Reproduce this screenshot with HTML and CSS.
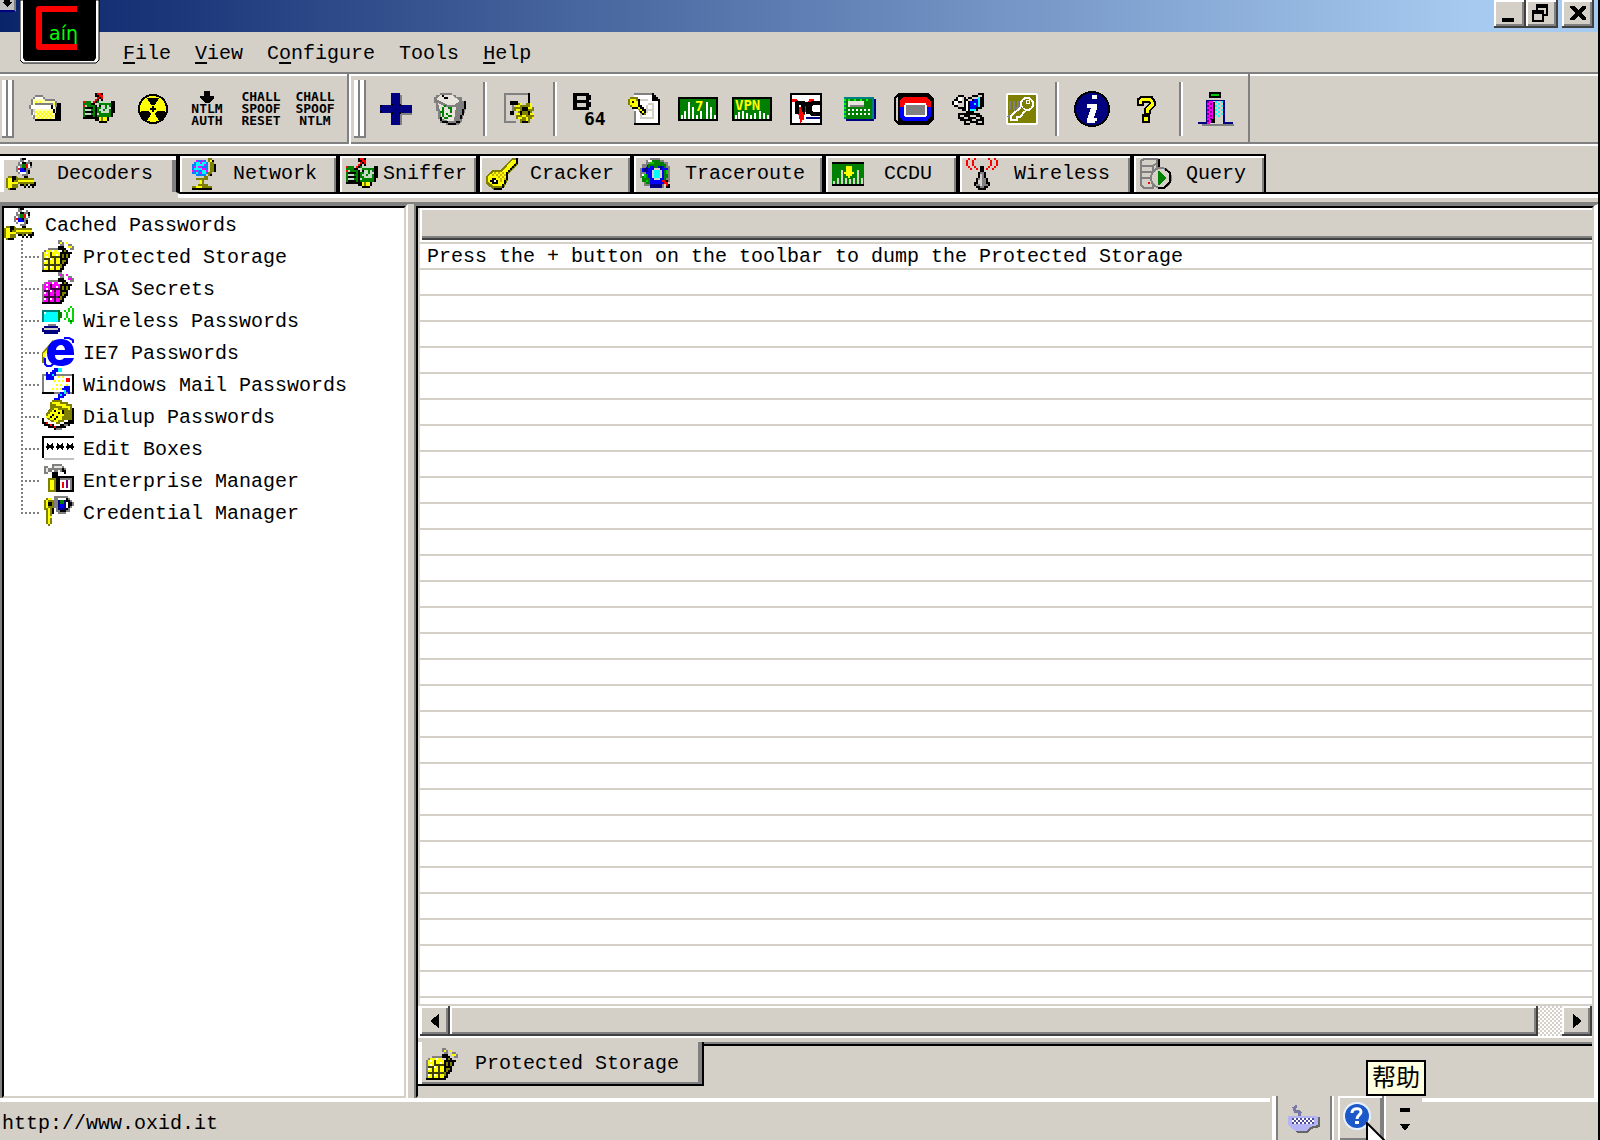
FILE: index.html
```html
<!DOCTYPE html>
<html lang="en">
<head>
<meta charset="utf-8">
<title>Cain</title>
<link rel="stylesheet" href="styles.css">
</head>
<body>
<svg class="sprites" aria-hidden="true">
  <symbol id="i-sniffer" viewBox="0 0 16 16">
    <path fill="#008000" d="M0 4h4v2h2v7H0zM7 4h8v8H7z"/><path d="M14 4h2v6h-1v2h-2v2h-1v1H8v-1H6v-1H0v-1h6V6h1v6h7zM1 7h4v1H1zM1 9h4v1H1zM1 11h4v1H1zM8 6h1v1H8z"/>
    <path fill="#c8d8c8" d="M1 6h1v1H1zM1 8h3v1H1zM1 10h3v1H1zM8 4h6v1H8zM7 5h1v2H7zM9 6h4v4H9zM8 8h1v1H8zM13 7h1v1h-1zM7 10h1v1H7z"/>
    <path fill="#008000" d="M11 6h1v2h-1zM10 8h1v1h-1z"/><path fill="#ff0" d="M8 12h4v2H8z"/><path fill="#808000" d="M9 12h1v2H9z"/>
    <path fill="red" d="M0 4h1v1H0zM0 6h1v1H0z"/>
    <path d="M6 0h4v4H9V3H8v1H7v1H6v1H4V5h1V4h1V3h1V2H6z"/><path fill="red" d="M7 0h2v1h1v2H9V2H8v1H7v1H6v1H5V4h1V3h1V2h1V1H7z"/>
  </symbol>
  <symbol id="i-decoder" viewBox="0 0 16 16">
    <path fill="#808080" d="M7 0h3v1h2v1h1v3h-1v2h-1v2H8V8H6V7H5V4h1V2h1z"/><path fill="#fff" d="M7 2h1v1H7zM6 4h1v3H6zM7 7h3v1H7zM9 1h2v1H9zM11 3h1v2h-1z"/>
    <path d="M8 0h2v1H8zM12 2h1v2h-1zM11 6h1v2h-1zM9 9h2v1H9zM8 2h2v1H8z"/>
    <path fill="#00f" d="M7 5h3v2H7z"/><path fill="red" d="M6 5h1v1H6zM10 3h1v2h-1z"/><path fill="#008000" d="M8 3h2v2H8z"/><path d="M9 5h1v1H9z"/>
    <path fill="#808000" d="M1 9h4l1 1h8v3h-1v1h-1v-1h-1v1H9v-1H6v2H5v1H1v-1H0v-5h1z"/><path fill="#ff0" d="M1 10h2v2h3v-1h8v1H6v1H3v2H1z"/><path d="M3 9h2v2H4v1H3zM7 13h2v1h1v-1h1v1h1v-1h2v-1h1v2h-1v1h-1v-1h-1v1h-1v-1h-1v1H9v-1H7zM2 15h3v1H2z"/>
  </symbol>
  <symbol id="i-globe" viewBox="0 0 16 16">
    <path fill="#808000" d="M11 0h2v1h1v6h-1v2h-2v2h-2v2h2v1h2v1H3v-1h3v-1h1v-2H5v-1h4V9h2V7h1V2h-1z"/><path fill="#ff0" d="M12 1h1v1h-1zM7 11h1v2H7zM5 14h3v1H5z"/><path d="M13 1h1v1h-1zM14 3h1v4h-1zM12 8h1v1h-1zM3 15h10v1H3z"/>
    <path fill="#0080ff" d="M5 1h5v1h1v6h-1v1H5V8H3V3h1V2h1z"/><path fill="#0ff" d="M5 2h5v2H8v2H6v2H5V6H4V4h1zM8 6h2v2H8z"/><path fill="#f0f" d="M5 1h1v1H5zM8 1h1v1H8zM7 2h1v1H7zM9 3h1v1H9zM4 4h1v1H4zM6 4h2v1H6zM8 5h2v1H8zM5 6h1v1H5zM7 7h1v1H7zM10 6h1v1h-1zM3 6h1v1H3z"/>
  </symbol>
  <symbol id="i-storage" viewBox="0 0 16 16">
    <path fill="#808080" d="M3 4h5v2H1V5h2zM0 6h1v9H0zM8 0h2v1h1v2H9V2H8zM13 2h2v1h1v2h-2V4h-1z"/><path d="M8 3h3v1h1v1h1v1h2v1h-1v2h-1v3h-1v1h-1v2h-1v1H0v-1h9V6h1V5H8z"/>
    <path fill="#808000" class="side-bricks" d="M10 7h1v2h-1zM11 5h1v1h-1zM10 10h1v2h-1zM12 7h1v2h-1zM9 12h1v2H9zM11 10h1v1h-1z"/>
    <path fill="currentColor" d="M2 5h6v1H2zM1 6h8v9H1zM9 1h1v1H9zM13 3h2v1h-2zM12 1h1v1h-1z"/>
    <path fill="#fff" d="M2 6h1v1H2zM5 5h1v1H5zM1 10h1v1H1zM4 9h1v1H4zM7 7h1v1H7zM1 13h1v1H1zM4 13h1v1H4zM7 12h1v1H7zM2 8h1v1H2zM6 10h1v1H6z"/>
    <path fill="#000" fill-opacity=".75" d="M1 9h3v1H1zM4 8h5v1H4zM1 12h8v1H1zM4 6h1v2H4zM3 10h1v2H3zM6 9h1v3H6zM3 13h1v2H3zM6 13h1v2H6z"/>
  </symbol>
</svg>

<div class="app">
  <header class="titlebar">
    <span class="sysbox"><svg viewBox="0 0 14 8"><path d="M4 0h6v2h2L7 7 2 2h2z"/></svg></span>
    <svg class="logo" viewBox="0 0 80 64" role="img" aria-label="Cain">
      <path fill="#fff" stroke="#000" stroke-width="1" d="M0 0h79v60l-3 3H3l-3-3z"/><path d="M3 0h73v58l-2 3H5l-2-3z"/>
      <path fill="none" stroke="red" stroke-width="6" stroke-linejoin="round" d="M57 9H19v38h38"/>
      <text x="29" y="40" fill="#0f0" font-family="DejaVu Sans" font-size="19">aíη</text>
    </svg>
    <div class="winbtns">
      <button class="winbtn" aria-label="Minimize"><svg viewBox="0 0 32 28"><path d="M8 18h12v4H8z"/></svg></button>
      <button class="winbtn" aria-label="Restore"><svg viewBox="0 0 32 28"><path fill-rule="evenodd" d="M10 4h12v12h-4v6H6V10h4zm2 4v2h6v4h2V8zm-4 6v6h8v-6z"/></svg></button>
      <button class="winbtn close" aria-label="Close"><svg viewBox="0 0 32 28"><path d="M8 6h4l4 4 4-4h4v2l-5 5 5 5v2h-4l-4-4-4 4H8v-2l5-5-5-5z"/></svg></button>
    </div>
  </header>

  <nav class="menubar">
    <button><u>F</u>ile</button><button><u>V</u>iew</button><button>C<u>o</u>nfigure</button><button>Tools</button><button><u>H</u>elp</button>
  </nav>

  <div class="toolbar">
    <div class="band">
      <span class="grip"></span>
      <button aria-label="Open"><svg class="ic" viewBox="0 0 16 16">
        <path d="M13 5h3v9H3v-1h11z"/><path fill="#ffffb0" d="M2 3h5l1 1h5v9H3V8H2z"/><path fill="none" stroke="#ff0" stroke-dasharray="1 1" d="M3 4.500h4M8 5.500h5M3 9.500h9M4 10.500h8M3 11.500h9M4 12.500h8"/>
        <path fill="#fff" d="M1 6h10v2H1zM3 2h4v1H3zM8 3h5v1H8zM1 8h1l1 5H2z"/><path fill="#808080" d="M3 1h4v1H3zM2 2h1v1H2zM1 3h1v3H1zM7 2h1v1H7zM8 3h5v1H8zM13 4h1v3h-1zM0 6h1v2H0zM1 8h1v3H1zM2 11h1v2H2zM3 5h9v1H3z"/><path d="M11 6h1v2h-1zM12 8h1v2h-1zM13 10h1v3h-1z"/>
      </svg></button>
      <button aria-label="Start sniffer"><svg class="ic"><use href="#i-sniffer"/></svg></button>
      <button aria-label="Start APR"><svg class="ic" viewBox="0 0 32 32">
        <circle cx="16" cy="16" r="14" fill="#ff0" stroke="#000" stroke-width="2"/>
        <path d="M10 5h12l-4 7h-4zM4 18h8l2 3-4 7c-4-2-6-5-6-10zM28 18h-8l-2 3 4 7c4-2 6-5 6-10zM15 13h2v2h2v2h-2v2h-2v-2h-2v-2h2z"/>
      </svg></button>
      <button class="word arrow"><svg viewBox="0 0 16 12"><path d="M5 0h6v5h4v2l-5 5H6L1 7V5h4z"/></svg>NTLM<br>AUTH</button>
      <button class="word">CHALL<br>SPOOF<br>RESET</button>
      <button class="word">CHALL<br>SPOOF<br>NTLM</button>
    </div>
    <div class="band">
      <span class="grip"></span>
      <button aria-label="Add"><svg class="ic" viewBox="0 0 32 32">
        <path fill="#808080" d="M14 2h8v12h12v8H22v12h-8z"/><path fill="#000080" d="M11 0h9v12h12v8H20v12h-9V20H0v-8h11z"/><path d="M11 11h2v2h-2zM19 11h2v2h-2zM11 19h2v2h-2zM19 19h2v2h-2zM0 12h2v2H0zM0 18h2v2H0z"/>
      </svg></button>
      <button aria-label="Remove"><svg class="ic" viewBox="0 0 16 16">
        <path fill="#808080" d="M3 0h6v1h2v1h3v2h2v4l-2 6-2 2H6v-1H3v-2H2V9H1V5H0V2h1V1h2z"/><path fill="#e8e4dc" d="M3 1h6l4 3-3 2H7L1 3zM2 5l4 2h5l-1 7H7l-3-1z"/>
        <path d="M4 1h1v1H4zM5 2h2v1H5zM15 4h1v4h-1zM14 8h1v3h-1zM13 11h1v2h-1zM11 14h2v1h-2zM7 15h4v1H7zM4 14h3v1H4zM3 12h1v2H3z"/>
        <path fill="#008000" d="M4 7h1v2H4zM5 6h1v1H5zM7 7h2v1H7zM8 8h1v2H8zM3 9h2v1H3zM4 10h1v2H4zM5 12h2v1H5zM7 11h2v1H7zM6 10h1v1H6z"/>
      </svg></button>
      <span class="sep"></span>
      <button aria-label="Configure"><svg class="ic" viewBox="0 0 16 16">
        <path fill="#d4d0c8" d="M0 0h13v14H0z"/><path fill="none" stroke="#808080" d="M12 .5H.5v14H6"/><path d="M12 0h1v6h-1zM3 4h4v2H5v5H3V9h1V6H3z"/>
        <path fill="#808080" d="M4 6h1v3H4z"/><path fill="#808000" d="M5 7h2V5h2v1h2V5h2v2h2v2h-1v2h1v2h-2v2H8v-2H6v-2h1V9H5z"/>
        <path fill="#ff0" d="M6 6h2v1H6zM8 5h1v1H8zM13 5h1v2h-1zM12 7h2v1h-2zM6 10h2v1H6zM13 10h2v1h-2zM7 12h2v1H7zM11 12h1v2h-1zM6 8h2v1H6zM9 11h2v1H9zM14 12h1v1h-1z"/><path d="M9 7h3v2H9zM8 9h1v2H8zM9 14h3v1H9zM12 9h1v2h-1z"/>
      </svg></button>
      <span class="sep"></span>
      <button aria-label="Base64 decoder"><svg class="ic ic36" viewBox="0 0 36 36">
        <path fill-rule="evenodd" d="M1 2h16v2h2v5h-2v2h2v5h-2v3H1zm4 3v4h9V5zm0 7v4h9v-4z"/>
        <text x="12" y="34" font-family="DejaVu Sans Mono" font-weight="bold" font-size="18">64</text>
      </svg></button>
      <button aria-label="Access decoder"><svg class="ic" viewBox="0 0 16 16">
        <path fill="#fff" d="M3 1h9l3 3v11H3z"/><path fill="#808080" d="M3 0h9v1H3zM3 9h1v6H3z"/><path d="M12 0h1v1h1v1h1v1h1v13H3v-1h12V4h-3z"/><path fill="#d4d0c8" d="M6 3h4v1H6zM10 5h3v1h-3zM10 8h3v1h-3zM6 9h1v4H6zM6 12h7v1H6zM9 6h1v4H9zM12 6h1v7h-1z"/>
        <path fill="#808000" d="M0 3h1V2h4v2h1v2l3 3v2H7L4 7H1V6H0z"/><path fill="#ff0" d="M1 3h3v1h1v2h1v1h1v1h1v2H7V9H6V8H5V7H2V6H1z"/><path d="M2 4h1v1H2zM5 3h1v3h1v1h1v1h1v2H8V9H7V8H6V7H5zM2 7h3v1H2zM6 9h1v1h1v1H7v-1H6z"/>
      </svg></button>
      <button aria-label="Type 7 decoder"><svg class="ic icwide" viewBox="0 0 40 24">
        <path fill="#008000" stroke="#000" stroke-width="2" d="M1 1h38v22H1z"/><path fill="#fff" d="M3 18h2v4H3zM6 14h2v8H6zM10 5h2v17h-2zM14 10h2v12h-2zM18 18h2v4h-2zM22 14h2v8h-2zM28 5h2v17h-2zM32 10h2v12h-2zM36 18h2v4h-2z"/>
        <text x="17" y="14" fill="#ff0" font-family="DejaVu Sans Mono" font-weight="bold" font-size="14">7</text>
      </svg></button>
      <button aria-label="VPN decoder"><svg class="ic icwide" viewBox="0 0 40 24">
        <path fill="#008000" stroke="#000" stroke-width="2" d="M1 1h38v22H1z"/><path fill="#fff" d="M3 18h2v4H3zM6 15h2v7H6zM10 14h2v8h-2zM14 16h2v6h-2zM18 18h2v4h-2zM22 16h2v6h-2zM27 14h2v8h-2zM31 16h2v6h-2zM35 18h2v4h-2z"/>
        <text x="3" y="13" fill="#ff0" font-family="DejaVu Sans Mono" font-weight="bold" font-size="14">VPN</text>
      </svg></button>
      <button aria-label="VNC decoder"><svg class="ic" viewBox="0 0 32 32">
        <path fill="#fff" stroke="#000" stroke-width="2" d="M1 1h30v30H1z"/><path fill="none" stroke="red" stroke-width="3" d="M2 7h4l5 19 6-14M17 12l4-5h3"/>
        <path fill="none" stroke="#000" stroke-width="4" d="M7 21V10h6v11M14 11h4v10M30 10h-8l-2 3v5l2 3h8"/><path fill="red" d="M9 14h2l3 9v4h-2z"/><path fill="#000080" d="M16 24h14v2H16z"/>
      </svg></button>
      <button aria-label="Hash calculator"><svg class="ic icflat" viewBox="0 0 16 12">
        <path fill="#008080" d="M0 0h15v11H0z"/><path fill="#000080" d="M15 1h1v10h-1zM1 11h14v1H1z"/><path fill="#008000" d="M1 1h13v10H1z"/><path fill="#e8e4dc" d="M2 2h8v3H2z"/><path fill="#808080" d="M3 4h7v1H3z"/><path fill="#0f0" d="M0 1h1v1H0zM0 3h1v1H0zM0 5h1v1H0zM0 7h1v1H0zM0 9h1v1H0zM2 1h1v1H2zM5 1h1v1H5zM8 1h1v1H8zM11 1h1v1h-1z"/>
        <path fill="none" stroke="#fff" stroke-dasharray="1 1" d="M2 6.500h12M2 8.500h12"/>
      </svg></button>
      <button aria-label="Token calculator"><svg class="ic ictoken" viewBox="0 0 40 32">
        <path d="M4 0h30l6 6v20l-6 6H4l-4-5V5z"/><path fill="#d4d0c8" d="M2 6l2-3v26l-2-3z"/><path fill="red" d="M9 4h23l5 5v5H6V8z"/><path fill="#00f" d="M6 14h31v9l-5 5H9l-3-4z"/><path fill="#808080" stroke="#fff" stroke-width="2" d="M12 11h19l1 2v9l-1 1H12l-1-1v-9z"/>
      </svg></button>
      <button aria-label="Remote desktop"><svg class="ic" viewBox="0 0 16 16">
        <path d="M3 1h3v1h1v1h1V2h2V1h3V0h3v7h-1v1h-2v1h-2v1H7V9H5V8H3V7H1V6H0V4h1V3h1V2h1z"/><path fill="#fff" d="M3 2h2v2H3zM1 4h2v2H1z"/><path fill="#d4d0c8" d="M5 2h1v5H3V5h2zM8 3h2V2h3V1h2v1h-2v1h-3v1H8z"/><path fill="#fff" d="M7 4h1v5H7z"/>
        <path fill="#00f" d="M9 4h2V3h3v4h-2v1H9z"/><path fill="#0ff" d="M13 2h1v5h-1zM9 8h3v1H9zM11 5h1v1h-1z"/>
        <path d="M3 10h11v1h1v1h1v4h-4v-1H9v1H6v-2H4v-1H3z"/><path fill="#d4d0c8" d="M4 11h2v1H4zM6 12h2v1H6zM9 11h3v1H9zM12 12h2v1h-2zM7 14h2v1H7zM10 13h2v1h-2zM13 14h2v1h-2z"/>
      </svg></button>
      <button aria-label="Syskey"><svg class="ic" viewBox="0 0 32 32">
        <rect x="1" y="1" width="30" height="30" rx="2" fill="#808000" stroke="#fff" stroke-width="2"/><path fill="none" stroke="#808080" stroke-width="5" stroke-dasharray="2 2" d="M3 10h13M3 14h11M3 25l9-10"/><circle cx="21" cy="11" r="6" fill="none" stroke="#fff" stroke-width="2"/><circle cx="22" cy="9" r="2" fill="none" stroke="#fff"/><path fill="#808000" stroke="#fff" stroke-width="2" d="M15 14L5 23v4h6v-3h3l5-6"/>
      </svg></button>
      <span class="sep"></span>
      <button aria-label="About"><svg class="ic ic36" viewBox="0 0 36 36">
        <circle cx="18" cy="18" r="17" fill="#000080" stroke="#000" stroke-width="2"/><path fill="#fff" d="M18 4h5v4h-5zM13 13h10v4l-3 10h3v3h-2v2h-8v-4l4-11h-4z"/>
      </svg></button>
      <button aria-label="Help"><svg class="ic ichelp" viewBox="0 0 20 28">
        <path fill="none" stroke="#000" stroke-width="7" d="M4 11V6l3-2h7l2 3v3l-5 5v4"/><path d="M6 19h8v9H6z"/><path fill="none" stroke="#ff0" stroke-width="3" d="M4 9V6l3-2h7l2 3v3l-5 5v3"/><path fill="#ff0" d="M8 22h4v4H8z"/>
      </svg></button>
      <span class="sep"></span>
      <button aria-label="Exit"><svg class="ic ic36" viewBox="0 0 38 36">
        <path fill="#808080" d="M4 34h34v2H4z"/><path d="M12 0h12v6H12z"/><path fill="#0c0" d="M14 2h8v2h-8z"/><path fill="#000080" d="M8 8h20v24h9v2H26V10H10v24H0v-2h8z"/><path fill="#f0f" d="M10 10h6v20l-4 4h-2z"/><path fill="none" stroke="#800080" stroke-width="2" stroke-dasharray="2 2" d="M11 10v22M14 12v20"/><path d="M16 11h2v22h-4v-4h2z"/><path fill="#d4d0c8" d="M18 10h8v24h-8z"/><path fill="none" stroke="#0ff" stroke-width="2" stroke-dasharray="2 2" d="M19 10v16M22 12v14M25 10v16"/>
      </svg></button>
    </div>
  </div>

  <div class="tabs" role="tablist">
    <button class="tab active" role="tab" aria-selected="true"><svg class="ic"><use href="#i-decoder"/></svg><span>Decoders</span></button>
    <button class="tab" role="tab"><svg class="ic"><use href="#i-globe"/></svg><span>Network</span></button>
    <button class="tab" role="tab"><svg class="ic"><use href="#i-sniffer"/></svg><span>Sniffer</span></button>
    <button class="tab" role="tab"><svg class="ic" viewBox="0 0 16 16">
      <path fill="#808000" d="M13 0h3v3l-5 5v3l-2 4-5 1-4-3V9l3-3h4z"/><path fill="#ff0" d="M13 1h2v1l-5 6v3l-2 3H4l-3-2V9l3-2h4z"/><path fill="none" stroke="#c8b400" stroke-dasharray="1 1" d="M4 7.500h5M3 8.500h7M6 9.500h4M7 10.500h3M7 11.500h2"/><path d="M3 10h2v1h1v2H3v-1H2v-1h1zM15 0h1v3h-1v1h-1v1h-1v1h-1v1h-1v4h-1v2H9v2H8v1H4v-1h4v-2h1v-2h1V7h1V6h1V5h1V4h1V3h1z"/><path fill="#fff" d="M4 11h1v1H4z"/>
    </svg><span>Cracker</span></button>
    <button class="tab" role="tab"><svg class="ic" viewBox="0 0 16 16">
      <path fill="#808080" d="M5 0h5v1h2v1h2v2h1v8h-1v1h-2v2H5v-1H2v-2H1v-2H0V5h1V3h2V1h2z"/><path fill="#00f" d="M4 3h8v2h2v5h-2v3H5v-2H3V7H1V5h2z"/><path fill="#008000" d="M5 1h5v1h2v1h1v2h-1V4H9v1H7V4H5v1H4V3h1zM1 8h3v2h1v3H3v-1H1zM12 6h2v4h-1v1h-1z"/><path fill="#0c0" d="M5 2h2v1H5zM2 8h1v2H2zM3 11h1v1H3zM13 6h1v2h-1z"/><path fill="#fff" d="M4 1h2v1H4zM1 8h1v1H1z"/><path fill="#000080" d="M5 13h6v2H5zM2 5h2v2H2zM10 4h1v2h-1z"/><path fill="#d4d0c8" d="M7 5h3v1h1v4h-1v1H7v-1H6V6h1z"/><path fill="#0ff" d="M7 6h3v4H7z"/><path fill="red" d="M11 11h2v1h1v1h-2v-1h-1zM13 13h1v1h-1z"/><path fill="#000" d="M12 11h2v1h-1zM14 13h1v2h-2v-1h1z"/>
    </svg><span>Traceroute</span></button>
    <button class="tab" role="tab"><svg class="ic icflat" viewBox="0 0 32 24">
      <path d="M0 0h32v24H0z"/><path fill="#008000" d="M0 2h32v20H0z"/><path fill="#d4d0c8" d="M1 19h2v3H1zM5 16h2v6H5zM9 8h2v14H9zM13 16h2v6h-2zM17 17h2v5h-2zM21 16h2v6h-2zM25 8h2v14h-2zM29 16h2v6h-2z"/><path fill="#ff0" d="M14 4h6v6h2v2h-2v2h-2v2h-2v-2h-2v-2h-2v-2h2z"/>
    </svg><span>CCDU</span></button>
    <button class="tab" role="tab"><svg class="ic" viewBox="0 0 32 32">
      <path fill="red" d="M2 0h2v2H2v6h2v2H2V8H0V2h2zM4 10h2v2H4zM8 0h2v2H8zM6 2h2v6H6zM8 8h2v2H8zM10 10h2v2h-2zM28 0h2v2h2v6h-2v2h-2V8h2V2h-2zM26 10h2v2h-2zM22 0h2v2h-2zM24 2h2v6h-2zM22 8h2v2h-2zM20 10h2v2h-2z"/>
      <path d="M14 8h4v6h2v6h2v4h2v4h-2v2h-2v2h-8v-2h-2v-2H8v-4h2v-4h2v-6h2z"/><path fill="#808080" d="M14 14h4v6h2v6h2v2h-4v2h-4v-2h-4v-2h2v-6h2z"/><path fill="#d4d0c8" d="M14 16h2v12h-2v-2h-2v-4h2z"/>
    </svg><span>Wireless</span></button>
    <button class="tab last" role="tab"><svg class="ic" viewBox="0 0 32 32">
      <path fill="#d4d0c8" stroke="#808080" stroke-width="2" d="M1 3l3-2h13v4l-4 3v22H4l-3-3zM1 8h12M1 14h12M1 20h12M13 8l4-3v8"/><path d="M18 1h2v12h-2z"/><circle cx="21" cy="20" r="10" fill="#d4d0c8" stroke="#808080" stroke-width="2"/><path fill="none" stroke="#000" stroke-width="2" d="M25 11l5 4v9l-6 6h-6"/><path fill="#008000" d="M18 13h2l6 7-6 7h-2z"/><path fill="red" d="M8 24h2v2H8z"/>
    </svg><span>Query</span></button>
    <div class="tabs-rest"></div>
  </div>
  <div class="tabs-base"></div>

  <main class="workspace">
    <section class="pane side">
      <div class="tree">
        <div class="node root"><svg class="ic"><use href="#i-decoder"/></svg>Cached Passwords</div>
        <ul>
          <li class="node"><svg class="ic gold"><use href="#i-storage"/></svg>Protected Storage</li>
          <li class="node"><svg class="ic magenta"><use href="#i-storage"/></svg>LSA Secrets</li>
          <li class="node"><svg class="ic" viewBox="0 0 16 16">
            <path fill="#008080" d="M0 3h9v6H0z"/><path fill="#0ff" d="M1 4h7v5H1z"/><path fill="#fff" d="M1 4h1v1H1z"/><path fill="#808080" d="M3 10h4v1H3z"/><path fill="#000080" d="M1 11h7v1h1v2H8v1H1v-1H0v-2h1z"/><path fill="#d4d0c8" d="M1 12h7v1H1z"/>
            <path fill="#008000" d="M8 3h1v5H8zM9 4h1v3H9zM14 1h1v1h-1zM13 8h2v1h-2z"/><path fill="#00d800" d="M11 3h1v1h1v3h-1v1h-1V7h1V4h-1zM14 1h1v1h1v7h-1v1h-1V9h1V2h-1zM13 2h1v7h-1V7h1V4h-1z"/>
          </svg>Wireless Passwords</li>
          <li class="node"><svg class="ic smooth" viewBox="0 0 32 32">
            <path fill="none" stroke="#808000" stroke-width="3" d="M1 27V18L12 5"/><path fill="none" stroke="#ff0" stroke-width="2" d="M2 21v-3L12 8"/><path fill="none" stroke="#00f" stroke-width="2" d="M22 2h5l4 2v3M3 22v6l2 2h4l3-3"/>
            <path fill="#00f" fill-rule="evenodd" d="M19 3c8 0 13 5 13 14v2H13c0 4 2 5 5 5 2 0 3-1 4-2h10c-2 6-7 8-13 8C10 30 5 25 5 17S10 3 19 3zm-5 11h9c0-3-2-5-4-5s-5 2-5 5z"/>
          </svg>IE7 Passwords</li>
          <li class="node"><svg class="ic" viewBox="0 0 16 16">
            <path fill="#fff" stroke="#808080" d="M.5 3.500h15v9H.5z"/><path d="M15 3h1v10h-1zM0 12h6v1H0z"/><path fill="#ff0" d="M8 4h1v1H8zM10 4h1v1h-1zM6 6h1v1H6zM8 6h1v1H8zM10 6h1v1h-1zM7 8h1v1H7zM9 8h1v1H9zM12 8h1v1h-1zM5 10h1v1H5zM7 10h1v1H7zM9 10h1v1H9zM13 9h1v1h-1z"/><path fill="red" d="M12 5h2v2h-2z"/><path fill="#00f" d="M6 0h3v1H8v1H7v2H6v2H2V2h1v1h1V2h1V1h1zM11 9h3v4h-1v-1h-1v2h-1v1H9v1H6v-1h2v-2h1v-1h2v-1h-1v-1h1z"/><path fill="#0ff" d="M8 0h2v2H8zM11 11h1v2h-1zM9 13h1v1H9zM5 3h1v1H5z"/>
          </svg>Windows Mail Passwords</li>
          <li class="node"><svg class="ic" viewBox="0 0 16 16">
            <path fill="#808000" d="M5 0h5v1h3v1h2v2h1v6l-5 3-5-1-4-3V7l2-3V1h1z"/><path fill="#ff0" d="M5 1h4v1h3v1h2v2h-1V4h-3V3H7V2H5zM3 7h1V6h1V5h1V4h2v1h2v2h1v1h-1v2H8v1H6v-1H4V9H2V8h1z"/><path d="M6 5h1v1H6zM8 6h1v1H8zM5 7h1v1H5zM7 8h1v1H7zM4 8h1v1H4zM6 9h1v1H6zM10 5h1v2h-1zM15 4h1v8h-2v1h-2v1h-2v1H6v-1H3v-1H1v-1H0V9h1v2h2v1h3v1h3v-1h2v-1h2v-1h2z"/><path fill="#fff" d="M1 9h1v1h2v1h3v1h2v-1h2v-1h2v1h-2v1H9v1H6v-1H3v-1H1z"/><path fill="#808080" d="M11 12h2v1h-2zM7 14h3v1H7z"/><path fill="red" d="M2 11h1v1H2zM4 12h1v1H4zM6 13h1v1H6z"/>
          </svg>Dialup Passwords</li>
          <li class="node"><svg class="ic icflat" viewBox="0 0 32 24">
            <path fill="#fff" d="M0 0h32v24H0z"/><path d="M0 0h32v2H2v20H0z"/><path fill="#c0c0c0" d="M2 22h30v2H2z"/><path fill="none" stroke="#000" stroke-width="2" d="M4 11h8M5 8l6 5M11 8l-6 5M14 11h8M15 8l6 5M21 8l-6 5M24 11h8M25 8l6 5M31 8l-6 5"/>
          </svg>Edit Boxes</li>
          <li class="node"><svg class="ic" viewBox="0 0 16 16">
            <path fill="#808080" d="M1 1h2v1h2V0h5v1h1v1h1v3h-1V4H9V3H8v3H6V3H5v1H3v1H1z"/><path fill="#e8e4dc" d="M2 2h1v2H2zM6 1h4v1H6z"/><path d="M5 4h3v3H5zM10 2h1v1h1v2h-1V4h-1zM7 6h9v8H7z"/><path fill="#808000" d="M3 7h4v7H3z"/><path fill="#ff0" d="M4 8h2v5H4z"/><path fill="#fff" d="M9 8h6v5H9z"/><path fill="#808080" d="M9 7h6v1H9zM14 8h1v5h-1z"/><path fill="red" d="M10 9h1v3h-1z"/><path fill="#800080" d="M12 8h1v4h-1z"/>
          </svg>Enterprise Manager</li>
          <li class="node"><svg class="ic" viewBox="0 0 16 16">
            <path fill="#808080" d="M6 0h7v1h1v1h1v1h1v2h-1v1h-1v2h-2v1H8V8H7V6H6z"/><path fill="#fff" d="M8 1h4v1H8zM12 2h1v1h1v3h-1v1h-1z"/><path d="M12 1h1v1h1v1h1v2h-1v1h-1v1h-1v1H9V7h3V6h1V3h-1z"/><path fill="#000080" d="M8 2h4v5H8z"/><path fill="#008000" d="M9 2h2v2H9z"/><path fill="#00f" d="M9 4h2v2H9z"/>
            <path fill="#808000" d="M2 1h3v1h1v4H5v8H4v1H3v-1H2V7H1V2h1z"/><path fill="#ff0" d="M2 2h1v4H2zM3 1h2v1H3zM3 6h1v8H3zM4 10h1v1H4z"/><path d="M3 3h2v2H3zM5 6h1v3H5z"/>
          </svg>Credential Manager</li>
        </ul>
      </div>
    </section>

    <section class="pane content">
      <div class="inner">
        <div class="list">
          <table>
            <thead><tr><th aria-label="Entry"></th></tr></thead>
            <tbody><tr><td>Press the + button on the toolbar to dump the Protected Storage</td></tr></tbody>
          </table>
        </div>
        <div class="scrollbar">
          <button class="sbtn" aria-label="Scroll left"><svg viewBox="0 0 8 14"><path d="M8 0v14L0 8V6z"/></svg></button>
          <div class="thumb"></div>
          <div class="track"></div>
          <button class="sbtn" aria-label="Scroll right"><svg viewBox="0 0 8 14"><path d="M0 0v14l8-6V6z"/></svg></button>
        </div>
        <div class="sheets" role="tablist">
          <button class="sheet" role="tab" aria-selected="true"><svg class="ic gold"><use href="#i-storage"/></svg><span>Protected Storage</span></button>
          <div class="sheets-rest"></div>
        </div>
      </div>
    </section>
  </main>

  <footer class="status">http://www.oxid.it</footer>

  <div class="langbar">
    <button class="lang-key" aria-label="Soft keyboard"><svg viewBox="0 0 32 30"><path fill="none" stroke="#7878a8" stroke-width="3" d="M11 12l1-3-2-2H7L6 4l3-2"/><path fill="#666" d="M3 13h29v10l-9 2-4 4H9l-6-6z"/><path fill="#b4b4f4" d="M0 12h29l1 2v7l-8 2-4 4H8l-6-4-2-3z"/><path fill="#fff" d="M4 14h22v6H4z"/><path fill="none" stroke="#4c4c98" stroke-width="2" stroke-dasharray="2 2" d="M4 15h22M6 17h20M4 19h22"/></svg></button>
    <button class="lang-help" aria-label="Help"><svg viewBox="0 0 30 30"><circle cx="15" cy="15" r="14" fill="#e8f2ff"/><circle cx="15" cy="15" r="12" fill="#1c58c8"/><path fill="none" stroke="#fff" stroke-width="3" d="M10 12c0-5 9-6 9-1 0 3-4 3-4 7"/><path fill="#fff" d="M13 20h4v3h-4z"/></svg></button>
    <div class="lang-more"><svg viewBox="0 0 10 22"><path d="M0 0h10v4H0zM0 16h10l-4 6H4z"/></svg></div>
  </div>
  <div class="tooltip" role="tooltip" lang="zh-CN">帮助</div>
  <svg class="cursor" viewBox="0 0 20 18"><path fill="#fff" stroke="#000" stroke-width="2" d="M1 22V1l20 20"/></svg>
</div>
</body>
</html>
```
FILE: styles.css
```css
* { box-sizing: border-box; }

:root {
  --face: #d4d0c8;
  --shade: #808080;
  --dark: #404040;
  --light: #fff;
}

body {
  margin: 0;
  height: 100vh;
  overflow: hidden;
  background: var(--face);
  color: #000;
  font: 20px/32px "Liberation Mono", monospace;
}

button {
  margin: 0;
  padding: 0;
  border: 0;
  border-radius: 0;
  background: var(--face);
  color: inherit;
  font: inherit;
}

svg { display: block; flex: none; shape-rendering: crispEdges; }
.sprites { position: absolute; width: 0; height: 0; }

.ic { width: 32px; height: 32px; }
.ic36 { width: 36px; height: 36px; }
.icwide { width: 40px; height: 24px; }
.icflat { width: 32px; height: 24px; }
.ictoken { width: 40px; height: 32px; }
.ichelp { width: 20px; height: 28px; }
.gold { color: #ff0; }
.magenta { color: #f0f; }
.smooth { shape-rendering: auto; }

.app {
  position: relative;
  display: flex;
  flex-direction: column;
  height: 100%;
  border-right: 2px solid #000;
}

/* Title bar */
.titlebar {
  display: flex;
  justify-content: space-between;
  height: 32px;
  padding-right: 4px;
  background: linear-gradient(90deg, #0a246a, #a6caf0 92%);
}
.sysbox {
  width: 16px;
  height: 12px;
  background: #c0c0c0;
  border-right: 2px solid var(--shade);
  border-bottom: 2px solid #000080;
}
.sysbox svg { width: 14px; height: 8px; }
.logo { position: absolute; top: 0; left: 20px; width: 80px; height: 64px; }
.winbtns { display: flex; }
.winbtn {
  width: 32px;
  height: 28px;
  box-shadow: inset -2px -2px var(--dark), inset 2px 2px var(--light), inset -4px -4px var(--shade);
}
.winbtn svg { width: 32px; height: 28px; }
.close { margin-left: 4px; }

/* Menu */
.menubar {
  display: flex;
  gap: 24px;
  align-items: center;
  height: 40px;
  padding: 4px 0 0 123px;
}
.menubar u { text-decoration-thickness: 2px; text-underline-offset: 3px; }

/* Toolbar */
.toolbar {
  display: flex;
  height: 74px;
  border-top: 2px solid var(--shade);
  border-bottom: 2px solid var(--light);
  box-shadow: inset 0 2px var(--light), inset 0 -2px var(--shade);
}
.band {
  display: flex;
  align-items: center;
  padding: 2px 5px 2px 2px;
  border-right: 2px solid var(--shade);
}
.band + .band { padding-left: 5px; box-shadow: inset 2px 0 var(--light); }
.band button {
  display: grid;
  place-items: center;
  width: 54px;
  height: 48px;
  background: none;
}
.grip {
  width: 12px;
  height: 58px;
  margin-right: 4px;
  border-bottom: 2px solid var(--shade);
  background: linear-gradient(90deg, #fff 4px, #808080 4px 6px, #fff 6px 10px, #808080 10px);
}
.band + .band .grip { margin-right: 3px; }
.sep {
  width: 4px;
  height: 54px;
  margin: 0 6px;
  border-left: 2px solid var(--shade);
  border-right: 2px solid var(--light);
}
.band .word {
  display: block;
  padding: 6px 0;
  font: bold 13px/12px "DejaVu Sans Mono", monospace;
}
.word svg { width: 16px; height: 12px; margin: 0 auto; }

/* Main tabs */
.tabs {
  display: grid;
  grid-template-columns: 180px 160px 140px 154px 192px 134px 174px 132px 1fr;
  padding-top: 8px;
}
.tab {
  display: flex;
  align-items: center;
  height: 40px;
  padding: 0 4px 0 6px;
  border: solid #000;
  border-width: 2px 4px 2px 0;
  box-shadow: inset 2px 2px var(--light), inset -2px 0 var(--shade);
}
.tab span { flex: 1; text-align: center; }
.tab.active { border-bottom-color: var(--face); box-shadow: inset 4px 4px var(--light), inset -4px 0 var(--shade); }
.tab.last { border-right-width: 2px; }
.tabs-rest { border-bottom: 2px solid #000; }
.tabs-base { height: 4px; margin: 0 0 4px 178px; background: var(--light); }

/* Work area */
.workspace {
  display: flex;
  gap: 6px;
  flex: 1;
  min-height: 0;
  border-top: 2px solid var(--shade);
}
.pane { border: solid var(--shade); border-width: 2px 0 0 2px; }
.side { width: 408px; border-right: 2px solid var(--light); }
.content { flex: 1; min-width: 0; border-right: 4px solid var(--light); }

.tree, .inner {
  height: 100%;
  border: 2px solid #000;
  border-right-color: var(--face);
  border-bottom-color: var(--face);
}
.tree { background: #fff; }
.tree ul { margin: 0; padding: 0 0 0 17px; list-style: none; }
.node {
  display: flex;
  align-items: center;
  gap: 9px;
  height: 32px;
  padding-top: 4px;
  white-space: pre;
}
.node .ic { margin-bottom: 4px; }
li.node {
  padding-left: 21px;
  background:
    repeating-linear-gradient(90deg, #808080 0 2px, transparent 2px 4px) 0 16px / 20px 2px no-repeat,
    repeating-linear-gradient(#808080 0 2px, transparent 2px 4px) 0 0 / 2px 100% no-repeat;
}
li.node:last-child { background-size: 20px 2px, 2px 16px; }

.inner { display: flex; flex-direction: column; }
.list {
  flex: 1;
  min-height: 0;
  overflow: hidden;
  margin-left: 2px;
  background: repeating-linear-gradient(#fff 0 24px, #d4d0c8 24px 26px) 0 36px #fff;
}
table { width: 100%; border-collapse: separate; border-spacing: 0; }
th {
  height: 36px;
  padding: 0;
  background: var(--face);
  border-bottom: 2px solid var(--face);
  box-shadow: inset 2px 2px #fff, inset 0 -2px #fff, inset 0 -4px var(--dark), inset 0 -6px var(--shade);
}
td {
  height: 26px;
  padding: 2px 7px 0;
  border-bottom: 2px solid var(--face);
  line-height: 22px;
  white-space: pre;
}

.scrollbar {
  display: flex;
  height: 34px;
  padding: 2px 0 2px 2px;
  background: linear-gradient(#d4d0c8 2px, #fff 2px);
}
.sbtn, .thumb {
  background: var(--face);
  box-shadow: inset -2px -2px var(--dark), inset 2px 2px var(--light), inset -4px -4px var(--shade);
}
.sbtn { display: grid; place-items: center; width: 30px; }
.sbtn svg { width: 8px; height: 14px; }
.thumb { flex: 1; }
.track { width: 24px; background: repeating-conic-gradient(#d4d0c8 0 25%, #fff 0 50%) 0 0 / 4px 4px; }

.sheets { display: flex; height: 58px; padding-top: 4px; }
.sheet {
  display: flex;
  align-items: center;
  gap: 17px;
  height: 44px;
  padding: 2px 23px 0 8px;
  border: solid #000;
  border-width: 0 2px 2px 0;
  box-shadow: inset 4px 0 var(--light), inset -4px -2px var(--shade);
}
.sheets-rest { flex: 1; border-top: 2px solid var(--shade); box-shadow: inset 0 2px #000; }

/* Status bar */
.status {
  height: 42px;
  padding: 6px 2px 0;
  border-top: 4px solid var(--light);
}

/* Floating language bar */
.langbar {
  position: absolute;
  right: 176px;
  bottom: 0;
  display: flex;
  width: 152px;
  height: 44px;
  background: linear-gradient(90deg, #fff 4px, #808080 4px 6px, #d4d0c8 6px);
  border-left: 2px solid var(--face);
}
.lang-key {
  width: 54px;
  margin-left: 6px;
  padding: 2px 0 0 10px;
  border-right: 2px solid var(--shade);
  box-shadow: 2px 0 #fff;
}
.lang-key svg { width: 32px; height: 30px; }
.lang-help {
  width: 44px;
  margin-left: 6px;
  padding: 0 0 4px 4px;
  box-shadow: inset 2px 2px #fff, inset -2px -2px var(--shade);
}
.lang-help svg { width: 30px; height: 30px; }
.lang-help svg, .cursor, .logo { shape-rendering: auto; }
.lang-more {
  flex: 1;
  padding: 12px 0 0 16px;
  border-left: 2px solid var(--shade);
  box-shadow: inset 2px 0 #fff;
}
.lang-more svg { width: 10px; height: 22px; }

.tooltip {
  position: absolute;
  right: 172px;
  bottom: 44px;
  height: 36px;
  padding: 0 4px;
  border: 2px solid #000;
  background: #ffffe1;
  font: 24px/28px "Noto Sans CJK SC", sans-serif;
}
.cursor { position: absolute; right: 212px; bottom: 0; width: 20px; height: 18px; }
```
